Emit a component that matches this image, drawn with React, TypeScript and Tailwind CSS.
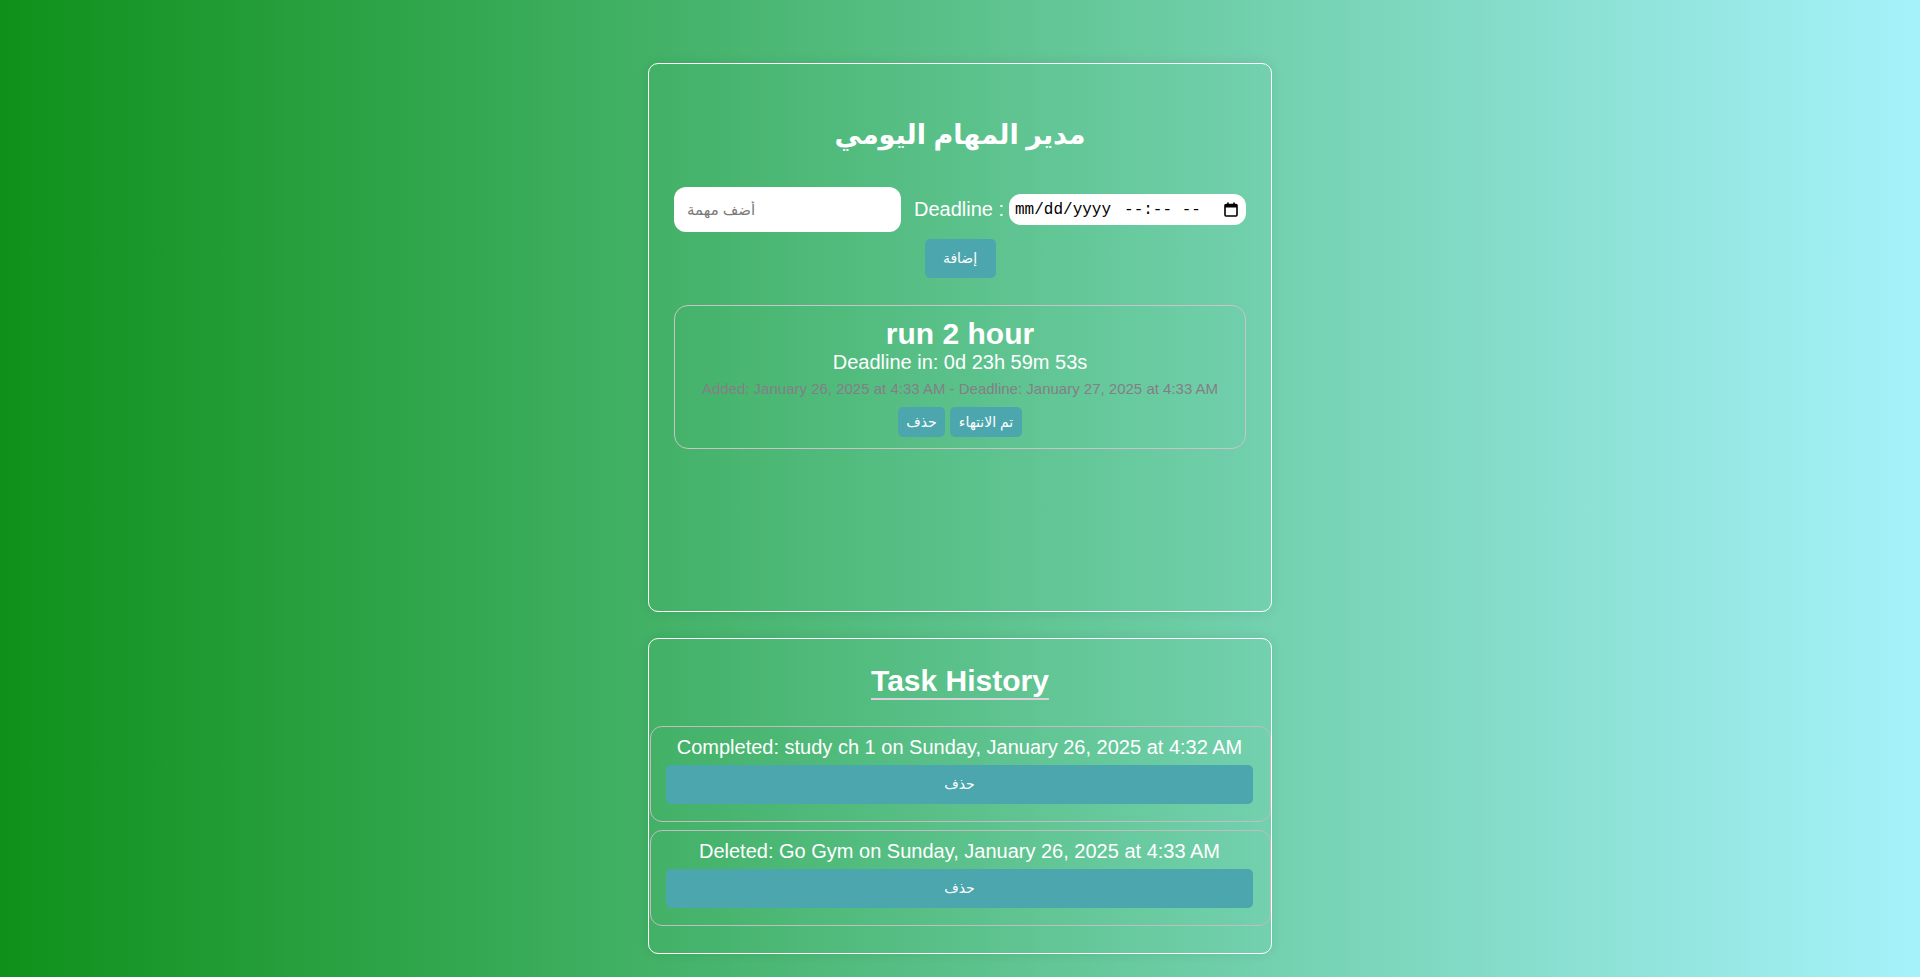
import React from "react";

const teal = "bg-[#4ca6ae]";

function CalendarIcon() {
  return (
    <svg width="14" height="15" viewBox="0 0 14 15" fill="none" className="shrink-0">
      <rect x="1" y="2.5" width="12" height="11.5" rx="1" stroke="#000" strokeWidth="1.6" />
      <rect x="1" y="2.5" width="12" height="3" fill="#000" />
      <rect x="3.2" y="0.5" width="1.6" height="3" fill="#000" />
      <rect x="9.2" y="0.5" width="1.6" height="3" fill="#000" />
    </svg>
  );
}

export default function App() {
  return (
    <div className="min-h-screen w-full bg-[linear-gradient(to_right,#0f901a,#a6f2fb)] pt-[63px] pb-[25px] font-['Liberation_Sans','DejaVu_Sans',sans-serif] text-white">
      {/* main card */}
      <div className="mx-auto box-border h-[549px] w-[624px] rounded-[10px] border border-white px-[25px] pt-[53px] shadow-[0_0_12px_rgba(0,0,0,0.08)]">
        <h1 className="text-center text-[27px] font-bold leading-[37px]">مدير المهام اليومي</h1>

        <div className="mt-[33px] flex items-center">
          <input
            type="text"
            placeholder="أضف مهمة"
            className="box-border h-[45px] w-[227px] rounded-[12px] bg-white pl-[13px] text-[15px] text-black outline-none placeholder:text-[#7a7a7a]"
          />
          <label className="ml-[13px] text-[20px] leading-[23px]">Deadline :</label>
          <div className="ml-[5px] box-border flex h-[31px] w-[237px] items-center rounded-[12px] bg-white pl-[6px] pr-[8px] font-['Liberation_Mono',monospace] text-[16px] leading-[18px] text-black">
            <span>mm/dd/yyyy</span>
            <span className="ml-[13px]">--:-- --</span>
            <span className="ml-auto flex">
              <CalendarIcon />
            </span>
          </div>
        </div>

        <div className="mt-[7px] flex justify-center">
          <button className={`h-[39px] w-[71px] rounded-[5px] ${teal} text-[14px] text-white`}>إضافة</button>
        </div>

        <div className="mt-[27px] box-border rounded-[14px] border border-[#c9c4c9] pt-[11px] pb-[11px] text-center">
          <div className="text-[30px] font-bold leading-[34px]">run 2 hour</div>
          <div className="text-[20px] leading-[23px]">Deadline in: 0d 23h 59m 53s</div>
          <div className="mt-[6px] text-[15px] leading-[17px] text-[#857e86]">
            Added: January 26, 2025 at 4:33 AM - Deadline: January 27, 2025 at 4:33 AM
          </div>
          <div className="mt-[10px] flex justify-center gap-[5px]">
            <button className={`h-[30px] w-[47px] rounded-[5px] ${teal} text-[14px] text-white`}>حذف</button>
            <button className={`h-[30px] w-[72px] rounded-[5px] ${teal} text-[14px] text-white`}>تم الانتهاء</button>
          </div>
        </div>
      </div>

      {/* history card */}
      <div className="mx-auto mt-[26px] box-border w-[624px] rounded-[10px] border border-white pt-[25px] pb-[27px] shadow-[0_0_12px_rgba(0,0,0,0.08)]">
        <div className="text-center">
          <h2 className="inline-block border-b-2 border-[#d9d0d8] text-[30px] font-bold leading-[34px]">Task History</h2>
        </div>
        <div className="mt-[26px] flex flex-col gap-[8px] pl-[1px]">
          {[
            "Completed: study ch 1 on Sunday, January 26, 2025 at 4:32 AM",
            "Deleted: Go Gym on Sunday, January 26, 2025 at 4:33 AM",
          ].map((t) => (
            <div key={t} className="box-border rounded-[12px] border border-[#c3bcc3] pt-[9px] pb-[17px] pl-[15px] pr-[17px] text-center">
              <div className="text-[20px] leading-[23px]">{t}</div>
              <button className={`mt-[6px] h-[39px] w-full rounded-[5px] ${teal} text-[14px] text-white`}>حذف</button>
            </div>
          ))}
        </div>
      </div>
    </div>
  );
}
